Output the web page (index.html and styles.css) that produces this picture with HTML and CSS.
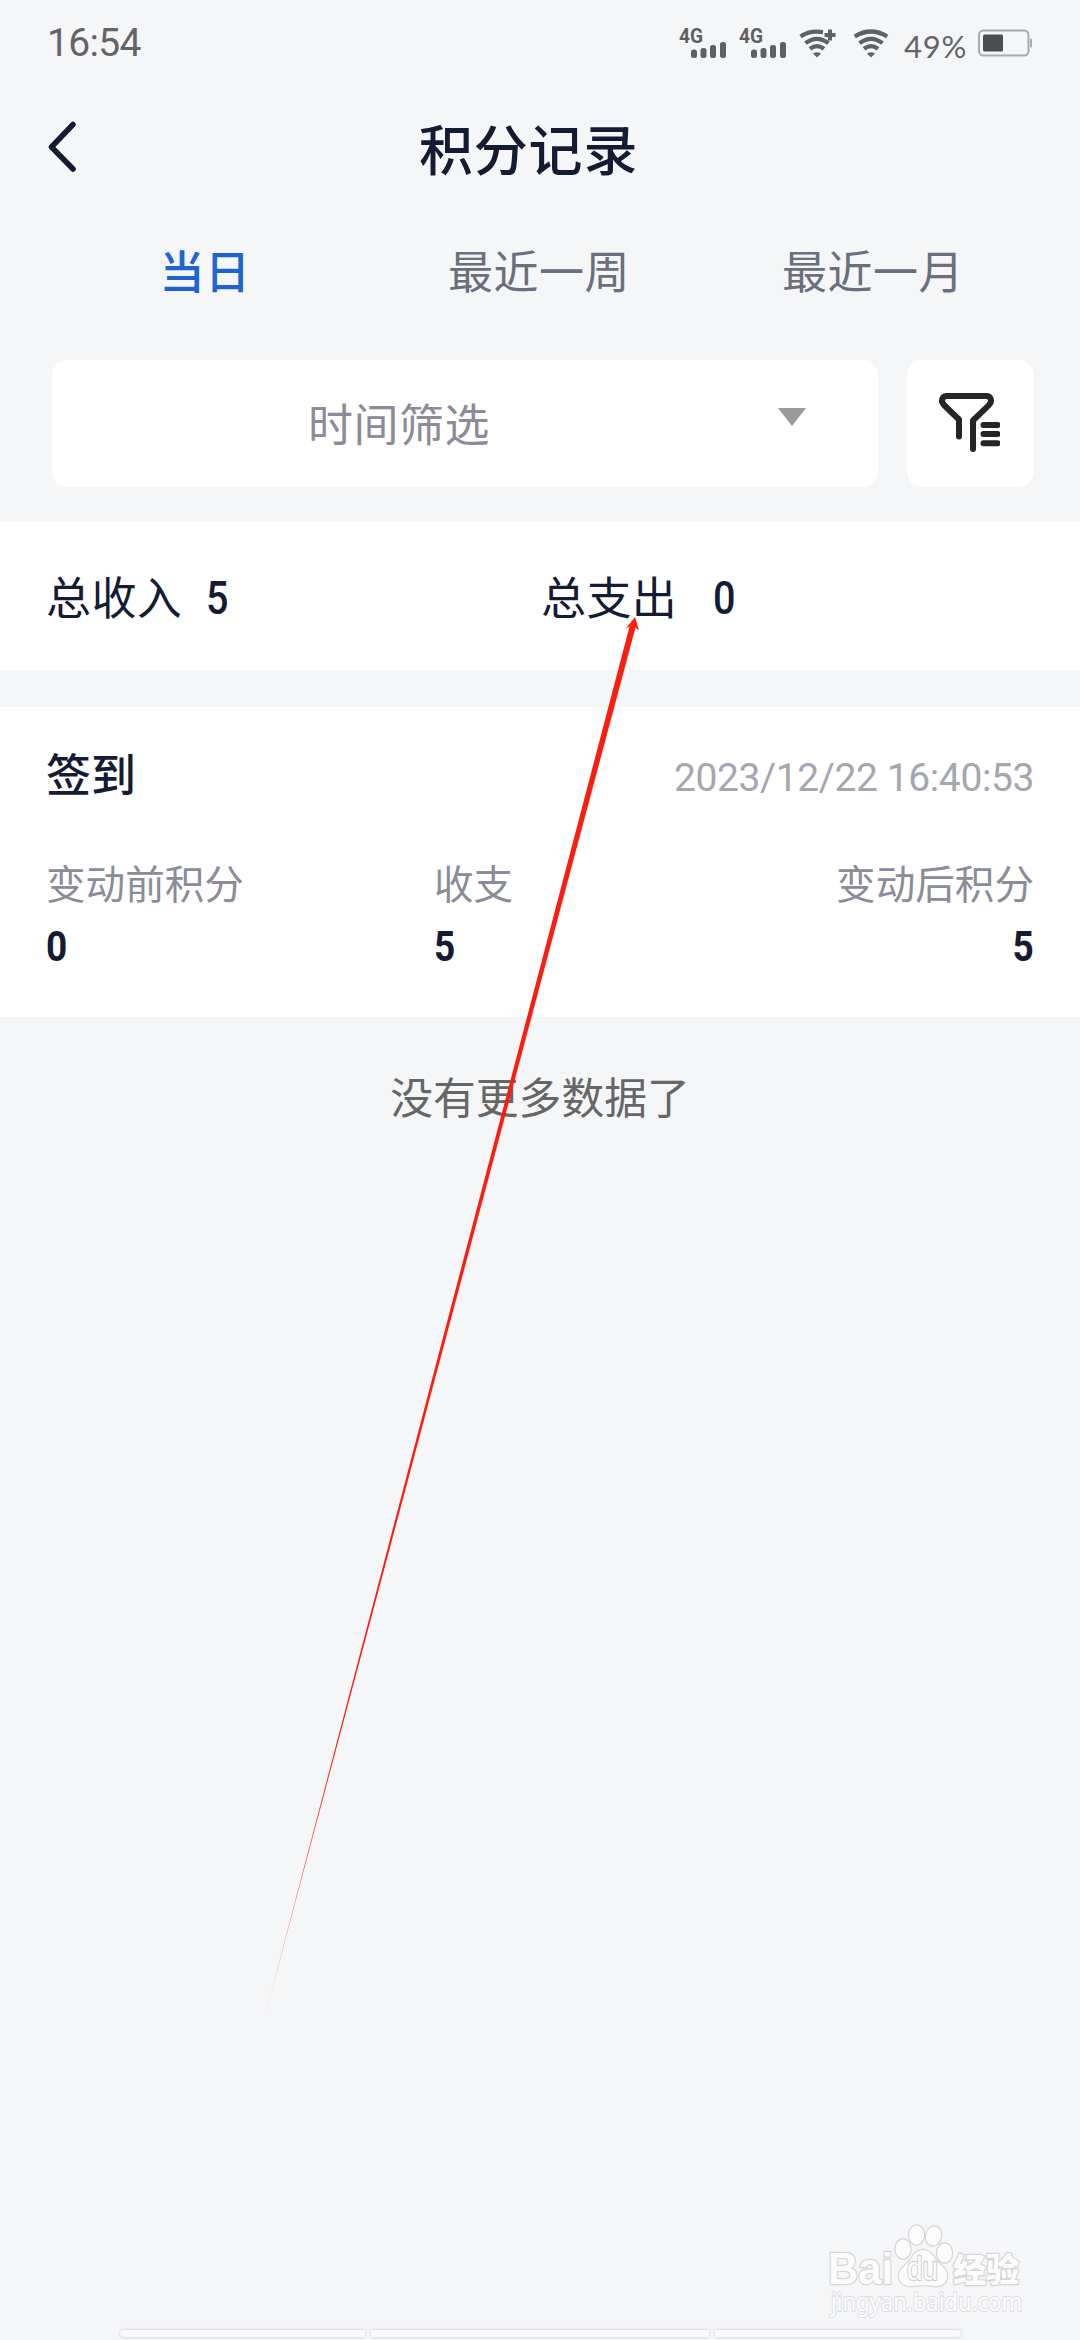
FILE: index.html
```html
<!DOCTYPE html>
<html lang="zh-CN">
<head>
<meta charset="utf-8">
<title>积分记录</title>
<link rel="stylesheet" href="styles.css">
</head>
<body>
<div class="screen">
  <header class="status">
    <span class="clock">16:54</span>
    <div class="indicators">
      <svg class="signal" width="48" height="32" viewBox="0 0 48 32"><text x="0" y="16" textLength="24" lengthAdjust="spacingAndGlyphs">4G</text><rect x="12" y="22.5" width="6" height="8.5" rx="2.5"/><rect x="21.500" y="21" width="6" height="10" rx="2.5"/><rect x="31" y="18" width="6" height="13" rx="2.5"/><rect x="41" y="15" width="6" height="16" rx="2.5"/></svg>
      <svg class="signal" width="48" height="32" viewBox="0 0 48 32"><text x="0" y="16" textLength="24" lengthAdjust="spacingAndGlyphs">4G</text><rect x="12" y="22.5" width="6" height="8.5" rx="2.5"/><rect x="21.500" y="21" width="6" height="10" rx="2.5"/><rect x="31" y="18" width="6" height="13" rx="2.5"/><rect x="41" y="15" width="6" height="16" rx="2.5"/></svg>
      <svg class="wifi plus" width="38" height="32" viewBox="0 0 38 32"><path class="arc" d="M1.500 9.500Q11 3 24 5.200M6.500 16.200Q18 7.500 29.500 16.200M11 21.700Q18 16.500 25 21.700"/><path d="M14 26.500Q18 24 22 26.500L18 30.500Z"/><path class="cross" d="M31 2.500V13.500M25.500 8H36.500"/></svg>
      <svg class="wifi" width="37" height="32" viewBox="0 0 37 32"><path class="arc" d="M1.800 9.500Q18 -.5 34.200 9.500M6.500 16.200Q18 7.500 29.500 16.200M11 21.700Q18 16.500 25 21.700"/><path d="M14 26.500Q18 24 22 26.500L18 30.500Z"/></svg>
      <span class="percent">49%</span>
      <svg class="battery" width="55" height="28" viewBox="0 0 55 28"><rect x="1" y="1.500" width="49.500" height="25" rx="4.500" fill="none" stroke="#a9aaad" stroke-width="2"/><rect x="5" y="5.500" width="20" height="17" rx="1.500" fill="#4d4e51"/><rect x="52" y="9.500" width="2" height="9" rx="1" fill="#a9aaad"/></svg>
    </div>
  </header>

  <nav class="titlebar">
    <svg class="back" width="32" height="52" viewBox="0 0 32 52"><path d="M26 3.500L4.500 26L26 48"/></svg>
    <h1>积分记录</h1>
  </nav>

  <div class="tabs">
    <span class="tab on">当日</span>
    <span class="tab">最近一周</span>
    <span class="tab">最近一月</span>
  </div>

  <div class="filters">
    <div class="picker">
      <span>时间筛选</span>
      <svg width="28" height="18" viewBox="0 0 28 18"><path d="M0 0H28L14 18Z" fill="#999"/></svg>
    </div>
    <div class="funnel">
      <svg width="64" height="64" viewBox="0 0 64 64"><path d="M23 46.500V29.500L8.500 15.500C4 11 6 6 11 6H50C55 6 57 11 52.500 15.500L37 30.500V59" /><path d="M47.500 35H61.500M47.500 44H61.500M47.500 53.200H61.500"/></svg>
    </div>
  </div>

  <section class="totals">
    <div class="total">总收入<b class="num">5</b></div>
    <div class="total out">总支出<b class="num">0</b></div>
  </section>

  <section class="record">
    <div class="record-head"><h2>签到</h2><time>2023/12/22 16:40:53</time></div>
    <div class="cols">
      <div class="col"><span>变动前积分</span><b class="num">0</b></div>
      <div class="col"><span>收支</span><b class="num">5</b></div>
      <div class="col last"><span>变动后积分</span><b class="num">5</b></div>
    </div>
  </section>

  <p class="end">没有更多数据了</p>

  <footer class="foot">
    <svg class="brand" width="210" height="110" viewBox="0 0 210 110">
      <g class="mark">
        <text class="latin" x="7" y="64" textLength="65" lengthAdjust="spacingAndGlyphs">Bai</text>
        <ellipse cx="82" cy="29" rx="7.500" ry="9.500"/>
        <ellipse cx="95.500" cy="15" rx="7.500" ry="9.500"/>
        <ellipse cx="112.500" cy="16" rx="7.500" ry="9.500" transform="rotate(12 112.500 16)"/>
        <ellipse cx="123.500" cy="33" rx="7.500" ry="9.500"/>
        <path d="M102 30C108 30 112 35 115 40C119 45 126 48 126 56C126 64 120 67 112 66C106 65 98 65 92 66C84 67 78 63 78 56C78 48 86 45 90 39C93 34 96 30 102 30Z"/>
        <text class="du" x="86" y="60" textLength="31" lengthAdjust="spacingAndGlyphs">du</text>
        <text class="cn" x="132" y="62" textLength="66" lengthAdjust="spacingAndGlyphs">经验</text>
      </g>
      <text class="url" x="10" y="91" textLength="191" lengthAdjust="spacingAndGlyphs">jingyan.baidu.com</text>
    </svg>
    <div class="segments"><i></i><i></i><i></i></div>
  </footer>

  <svg class="arrow" width="400" height="1410" viewBox="0 0 400 1410">
    <defs><linearGradient id="fade" x1="0" y1="0" x2="0" y2="1"><stop offset=".8" stop-color="#fd1d10"/><stop offset="1" stop-color="#fd1d10" stop-opacity=".5"/></linearGradient></defs>
    <path fill="url(#fade)" d="M385 7L375.500 19L379.500 16.500L15.500 1404L385.500 17.500L389 20.500Z"/>
  </svg>
</div>
</body>
</html>
```
FILE: styles.css
```css
* { box-sizing: border-box; }
body { margin: 0; background: #f4f6f8; font-family: "Noto Sans CJK SC", sans-serif; color: #141b33; }
h1, h2, p { margin: 0; font-weight: 500; }
svg { display: block; flex: none; }

.screen { position: relative; width: 1080px; height: 2340px; overflow: hidden; display: flex; flex-direction: column; }

.status { height: 90px; padding: 0 47px 4px 47px; display: flex; align-items: center; justify-content: space-between; color: #646466; }
.clock { font: 400 39px/40px Roboto, sans-serif; letter-spacing: -.7px; }
.indicators { display: flex; align-items: center; fill: #5f6062; }
.signal { margin-right: 12px; overflow: visible; }
.signal text { font: 700 20px Roboto, sans-serif; }
.wifi .arc { fill: none; stroke: #5f6062; stroke-width: 4.2; }
.wifi .cross { fill: none; stroke: #5f6062; stroke-width: 4; }
.plus { margin-right: 16px; }
.percent { width: 65px; margin: 5px 9px 0 14px; font: 400 31px/32px Lato, sans-serif; letter-spacing: .8px; white-space: nowrap; }

.titlebar { height: 114px; padding-left: 47px; display: flex; align-items: center; }
.back { fill: none; stroke: #141b33; stroke-width: 5.500; stroke-linecap: round; stroke-linejoin: round; }
.titlebar h1 { margin: 2px 0 0 340px; font-size: 54px; line-height: 80px; letter-spacing: .8px; }

.tabs { height: 156px; padding: 28px 38px 0; display: grid; grid-template-columns: repeat(3, 334px); text-align: center; }
.tab { font-size: 45px; line-height: 76px; letter-spacing: .5px; color: #6b6f7c; }
.tab.on { color: #2064d0; font-weight: 500; }

.filters { height: 162px; padding: 0 46px 35px 52px; display: flex; justify-content: space-between; }
.picker { width: 826px; border-radius: 15px; background: #fff; display: flex; align-items: center; padding: 0 72px 0 256px; justify-content: space-between; color: #8b8c97; font-size: 45px; line-height: 80px; letter-spacing: .5px; }
.picker span { margin-bottom: 1px; }
.picker svg { margin-bottom: 14px; }
.funnel { width: 127px; border-radius: 15px; background: #fff; padding: 30px 0 0 29px; }
.funnel path { fill: none; stroke: #242525; stroke-width: 6; stroke-linecap: round; stroke-linejoin: round; }

.totals { height: 148px; padding: 0 48px 0 46px; background: #fff; display: grid; grid-template-columns: 495px 1fr; align-items: center; font-size: 45px; line-height: 80px; }
.total { display: flex; align-items: center; letter-spacing: .4px; }
.num { display: block; width: max-content; font: 500 46px/48px Roboto, sans-serif; letter-spacing: 0; transform: scaleX(.86); transform-origin: left; }
.total .num { margin: 3px 0 0 24px; }
.total.out .num { margin-left: 36px; }

.record { margin-top: 37px; height: 310px; padding: 27px 46px 0; background: #fff; }
.record-head { height: 80px; display: flex; justify-content: space-between; align-items: center; }
.record h2 { font-size: 45px; line-height: 80px; margin-bottom: 2px; }
.record time { margin-top: 8px; color: #a5a6b0; font: 400 39px/44px Roboto, sans-serif; letter-spacing: -.4px; }
.cols { display: flex; justify-content: space-between; margin-top: 38px; }
.col { width: 388px; }
.col span { display: block; font-size: 39.600px; line-height: 60px; color: #8b8c97; }
.col .num { font-size: 43px; font-weight: 700; margin-top: 10px; line-height: 48px; }
.col.last { width: auto; flex: none; }
.col:nth-child(2) { width: auto; flex: 1; }
.last .num { margin-left: auto; transform-origin: right; }

.end { margin-top: 46px; text-align: center; font-size: 42.800px; line-height: 64px; font-weight: 400; color: #666; }

.foot { margin-top: auto; height: 120px; }
.brand { margin-left: 821px; overflow: visible; }
.brand text, .mark ellipse, .mark path { fill: #fcfcfd; stroke: #d4d5d7; stroke-width: 2.400; paint-order: stroke; stroke-linejoin: round; }
.brand .latin { font: 700 44px "Liberation Sans", sans-serif; }
.brand .du { font: 400 34px "Liberation Sans", sans-serif; stroke: #cfd0d2; }
.brand .cn { font: 900 33px "Noto Sans CJK SC", sans-serif; }
.brand .url { font: 400 26px "Noto Sans", sans-serif; stroke-width: 2; stroke: #dcdddf; }
.segments { width: 841px; height: 7px; margin-left: 120px; display: grid; grid-template-columns: 245px 338px 246px; column-gap: 6px; }
.segments i { background: #fafafc; box-shadow: 0 0 3px #c0c1c3; }
.segments i:first-child { border-radius: 4px 0 0 4px; }
.segments i:last-child { border-radius: 0 4px 4px 0; }

.arrow { position: absolute; left: 250px; top: 610px; }
```
